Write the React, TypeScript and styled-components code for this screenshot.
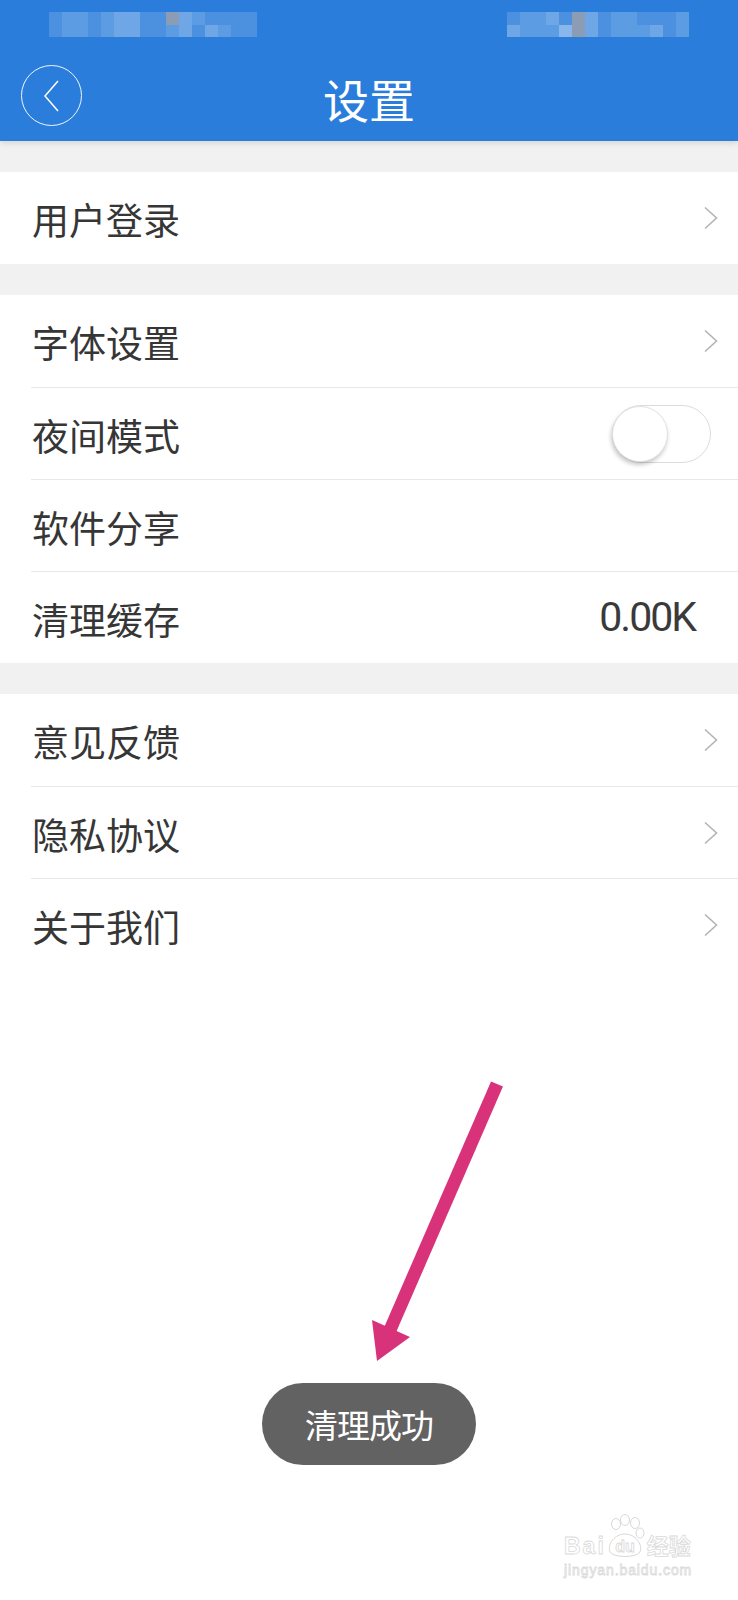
import React from "react";
import styled, { createGlobalStyle } from "styled-components";

const GlobalStyle = createGlobalStyle`
  html, body {
    margin: 0;
    padding: 0;
    background: #ffffff;
  }
  body {
    font-family: "Noto Sans CJK SC", "Noto Sans", sans-serif;
    -webkit-font-smoothing: antialiased;
  }
  * {
    box-sizing: border-box;
  }
`;

const Page = styled.div`
  position: relative;
  width: 738px;
  min-height: 1600px;
  background: #ffffff;
  overflow: hidden;
`;

const Header = styled.header`
  position: relative;
  z-index: 2;
  background: #2a7ddb;
  box-shadow: 0 2px 6px rgba(0, 0, 0, 0.12);
`;

const StatusBar = styled.div`
  height: 50px;
  display: flex;
  align-items: flex-start;
  justify-content: space-between;
  padding: 12px 49px 0 49px;
`;

const Blur = styled.div<{ $cols: number }>`
  display: grid;
  grid-template-columns: repeat(${({ $cols }) => $cols}, 13px);
  grid-auto-rows: 12.5px;
`;

const Pixel = styled.div<{ $shade: string }>`
  background: ${({ $shade }) => $shade};
`;

const NavBar = styled.div`
  height: 91px;
  display: grid;
  grid-template-columns: 1fr auto 1fr;
  align-items: center;
`;

const BackButton = styled.button`
  justify-self: start;
  margin-left: 21px;
  width: 61px;
  height: 61px;
  border-radius: 50%;
  border: 1.5px solid rgba(255, 255, 255, 0.92);
  background: transparent;
  padding: 0;
  display: flex;
  align-items: center;
  justify-content: center;
  cursor: pointer;
`;

const Title = styled.h1`
  margin: 0;
  font-size: 46px;
  font-weight: 400;
  color: #ffffff;
  line-height: 1;
  letter-spacing: 0;
  padding-top: 4px;
`;

const Gap = styled.div`
  height: 31px;
  background: #f1f1f1;
`;

const Section = styled.section`
  background: #ffffff;
  padding-left: 31px;
`;

const Row = styled.div`
  height: 92px;
  display: flex;
  align-items: center;
  justify-content: space-between;
  & + & {
    border-top: 1px solid #e8e8e8;
  }
`;

const Label = styled.span`
  font-size: 37px;
  color: #363636;
  line-height: 1;
  padding-left: 1px;
  padding-top: 3px;
`;

const Chevron = styled.svg`
  width: 16px;
  height: 24px;
  margin-right: 19px;
`;

const Value = styled.span`
  font-family: Roboto, "Liberation Sans", sans-serif;
  font-size: 41px;
  letter-spacing: -2px;
  color: #3a3a3a;
  margin-right: 43px;
  line-height: 1;
`;

const Track = styled.div`
  width: 99px;
  height: 58px;
  margin-right: 27px;
  border-radius: 29px;
  border: 1.5px solid #dcdcdc;
  background: #ffffff;
  display: flex;
  align-items: center;
`;

const Knob = styled.div`
  width: 56px;
  height: 56px;
  margin-left: -1px;
  border-radius: 50%;
  background: #ffffff;
  border: 1px solid #e2e2e2;
  box-shadow: -1px 3px 4px rgba(0, 0, 0, 0.22);
`;

const Overlay = styled.svg`
  position: absolute;
  left: 0;
  top: 0;
  pointer-events: none;
`;

const Toast = styled.div`
  position: absolute;
  top: 1383px;
  left: 50%;
  transform: translateX(-50%);
  width: 214px;
  height: 82px;
  border-radius: 41px;
  background: #626262;
  color: #ffffff;
  display: flex;
  align-items: center;
  justify-content: center;
  font-size: 33px;
  font-weight: 400;
  letter-spacing: -1px;
`;

const Watermark = styled.div`
  position: absolute;
  left: 564px;
  top: 1514px;
  display: flex;
  flex-direction: column;
  align-items: flex-start;
  color: #ffffff;
  -webkit-text-stroke: 0.8px #dadada;
  font-family: "Liberation Sans", "Noto Sans CJK SC", sans-serif;
  font-weight: 700;
`;

const MarkLine = styled.div`
  display: flex;
  align-items: flex-end;
  line-height: 1;
`;

const MarkWord = styled.span<{ $size: number; $spacing: number }>`
  font-size: ${({ $size }) => $size}px;
  letter-spacing: ${({ $spacing }) => $spacing}px;
`;

const MarkSite = styled.div`
  font-size: 14px;
  letter-spacing: 0.9px;
  margin-top: 4px;
  margin-left: 0;
  font-weight: 400;
`;

const leftBlur = [
  "1221233115321111",
  "1221233112313211",
];
const rightBlur = [
  "12231431221112",
  "32224431222312",
];

const shades: Record<string, string> = {
  "1": "rgba(255,255,255,0.16)",
  "2": "rgba(255,255,255,0.24)",
  "3": "rgba(255,255,255,0.32)",
  "4": "rgba(255,255,255,0.45)",
  "5": "rgba(150,160,175,0.9)",
};

function BlurBlock({ rows, grayAt }: { rows: string[]; grayAt?: number }) {
  const cols = rows[0].length;
  return (
    <Blur $cols={cols}>
      {rows.map((r, ri) =>
        r.split("").map((c, ci) => (
          <Pixel
            key={`${ri}-${ci}`}
            $shade={ci === grayAt ? shades["5"] : shades[c]}
          />
        ))
      )}
    </Blur>
  );
}

function ChevronIcon() {
  return (
    <Chevron viewBox="0 0 16 24">
      <path d="M2 1.5 L13.5 12 L2 22.5" fill="none" stroke="#b4b4b4" strokeWidth="1.6" />
    </Chevron>
  );
}

function Paw() {
  return (
    <svg width="38" height="44" viewBox="0 0 38 44" style={{ margin: "0 2px 0 1px" }}>
      <g fill="#ffffff" stroke="#d8d8d8" strokeWidth="1">
        <ellipse cx="9" cy="10" rx="4.5" ry="5.5" />
        <ellipse cx="18" cy="6" rx="4.5" ry="5.5" />
        <ellipse cx="28" cy="9" rx="4.5" ry="5.5" />
        <ellipse cx="33" cy="19" rx="4" ry="5" />
        <path d="M3 38 C0 30 8 20 18 20 C28 20 36 30 33 38 C29 44 7 44 3 38 Z" />
      </g>
      <text x="18" y="38" textAnchor="middle" fontSize="16" fontWeight="700" fontFamily="Liberation Sans" fill="#fff" stroke="#d8d8d8" strokeWidth="0.8">
        du
      </text>
    </svg>
  );
}

type Item = { label: string; kind: "link" | "toggle" | "value" | "plain"; value?: string };

const groups: Item[][] = [
  [{ label: "用户登录", kind: "link" }],
  [
    { label: "字体设置", kind: "link" },
    { label: "夜间模式", kind: "toggle" },
    { label: "软件分享", kind: "plain" },
    { label: "清理缓存", kind: "value", value: "0.00K" },
  ],
  [
    { label: "意见反馈", kind: "link" },
    { label: "隐私协议", kind: "link" },
    { label: "关于我们", kind: "link" },
  ],
];

export default function App() {
  return (
    <Page>
      <GlobalStyle />
      <Header>
        <StatusBar>
          <BlurBlock rows={leftBlur} />
          <BlurBlock rows={rightBlur} grayAt={5} />
        </StatusBar>
        <NavBar>
          <BackButton aria-label="返回">
            <svg width="20" height="34" viewBox="0 0 20 34">
              <path d="M16 2 L3 17 L16 32" fill="none" stroke="#ffffff" strokeWidth="1.5" />
            </svg>
          </BackButton>
          <Title>设置</Title>
          <span />
        </NavBar>
      </Header>

      {groups.map((items, gi) => (
        <React.Fragment key={gi}>
          <Gap />
          <Section>
            {items.map((it) => (
              <Row key={it.label}>
                <Label>{it.label}</Label>
                {it.kind === "link" && <ChevronIcon />}
                {it.kind === "toggle" && (
                  <Track>
                    <Knob />
                  </Track>
                )}
                {it.kind === "value" && <Value>{it.value}</Value>}
              </Row>
            ))}
          </Section>
        </React.Fragment>
      ))}

      <Overlay width="738" height="1600" viewBox="0 0 738 1600">
        <line x1="497" y1="1084" x2="390" y2="1330" stroke="#d8327a" strokeWidth="13" />
        <polygon points="372,1320 410,1337 377,1361" fill="#d8327a" />
      </Overlay>

      <Toast>清理成功</Toast>

      <Watermark>
        <MarkLine>
          <MarkWord $size={23} $spacing={2}>Bai</MarkWord>
          <Paw />
          <MarkWord $size={22} $spacing={0}>经验</MarkWord>
        </MarkLine>
        <MarkSite>jingyan.baidu.com</MarkSite>
      </Watermark>
    </Page>
  );
}
